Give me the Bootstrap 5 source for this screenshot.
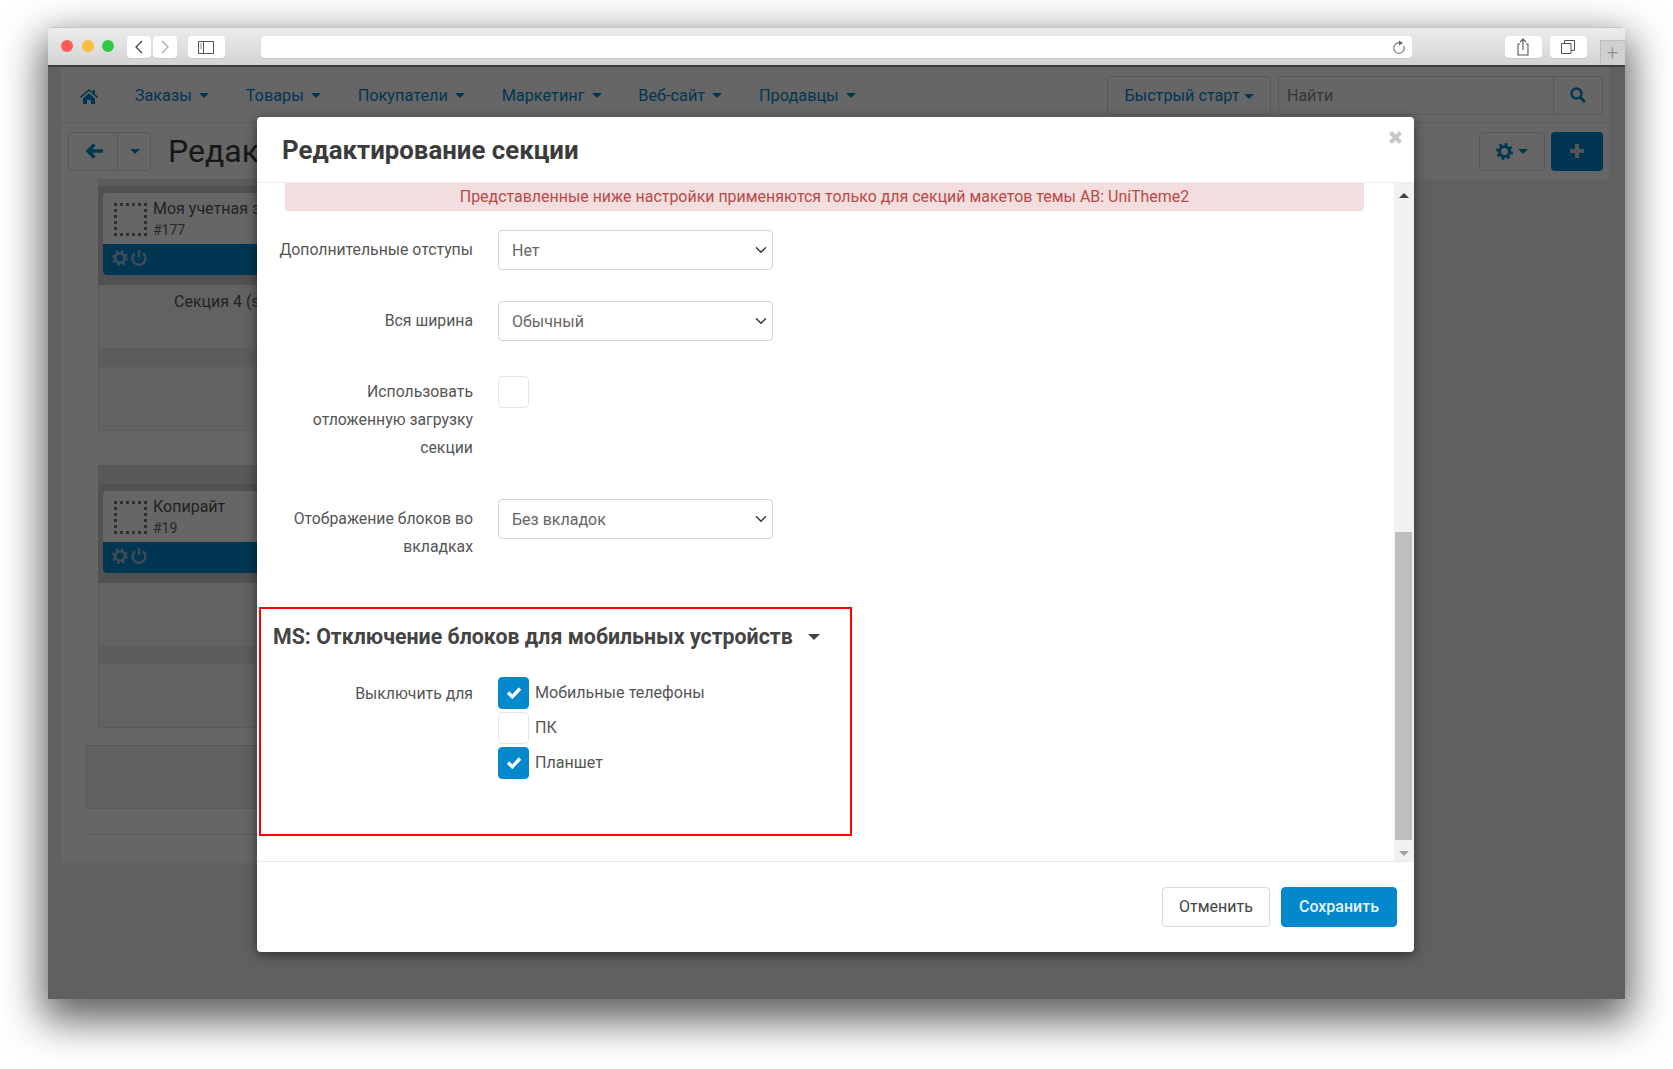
<!DOCTYPE html>
<html lang="ru"><head><meta charset="utf-8"><title>Редактирование секции</title>
<link href="https://cdn.jsdelivr.net/npm/bootstrap@5.3.0/dist/css/bootstrap.min.css" rel="stylesheet">
<style>
html,body{height:100%;overflow:hidden}
body{background:#fff;font-family:Roboto,"Noto Sans",sans-serif;font-size:15.5px;color:#444;padding:27px 0 0 48px}
.win{width:1577px;height:972px;position:relative;overflow:hidden;border-radius:5px 5px 0 0;display:flex;flex-direction:column}
.shadowbox{width:1577px;height:972px;box-shadow:0 16px 40px 6px rgba(0,0,0,.62);border-radius:5px 5px 0 0}
.tbar{height:40px;flex:none;background:linear-gradient(#ececec,#d3d3d3);border-top:1px solid #c4c4c4;border-bottom:2px solid #3b3b42;display:flex;align-items:flex-start;padding:8px 0 0 13px;position:relative}
.dot{width:12px;height:12px;border-radius:50%;margin:4px 8.5px 0 0;flex:none}
.tb{height:22px;background:#fff;border-radius:4px;display:flex;align-items:center;justify-content:center;flex:none;box-shadow:0 1px 0 #c8c8c8}
.tbfirst{margin-left:4px}
.urlb{width:1151px;margin-left:36px;justify-content:flex-end;padding-right:6px}
.plustab{width:25px;height:25px;border:1px solid #bdbdbd;border-right:0;border-bottom:0;margin-left:13px;margin-top:4px;background:#d0d0d0;color:#8e8e8e;font-size:20px;line-height:22px;text-align:center;font-weight:300}
.pagezone{flex:1;background:#eff0f2;position:relative;overflow:hidden;padding:0 0 0 13px}
.toppanel{width:1549px;background:#fff;border-radius:0 0 4px 4px;height:112px}
.navrow{height:56px;display:flex;align-items:center;padding:1px 7px 0 19px;border-bottom:1px solid #eee}
.toolrow{height:56px;display:flex;align-items:center;padding:0 7px 0 7px}
.navi{color:#0388cc;text-decoration:none;font-size:16.3px;display:flex;align-items:center;white-space:nowrap;margin-right:36.8px;padding-top:2px}
.navi:last-of-type{margin-right:0}
.navi .cr{margin-top:-1px}
.cr{display:inline-block;width:0;height:0;border-left:5px solid transparent;border-right:5px solid transparent;border-top:5px solid currentColor;margin-left:7px}
.bg1{height:39px;border:1px solid #ddd;border-radius:4px;display:flex;align-items:center;color:#0388cc;background:#fff}
.qs{width:164px;justify-content:center;margin-left:auto;font-size:16.2px;padding-top:2px}
.srch{width:325px;margin-left:7px;color:#888;font-size:16px;padding-left:8px}
.srch span{flex:1;padding-top:2px}
.srch i{width:49px;height:37px;border-left:1px solid #ddd;display:flex;align-items:center;justify-content:center}
.backg{width:83px;flex:none}
.backg b{width:49px;height:100%;display:flex;align-items:center;justify-content:center;border-right:1px solid #ddd;padding-left:2px}
.backg i{flex:1;display:flex;justify-content:center;padding-left:1px}
.backg .cr{margin:0}
.ptitle{font-size:32px;color:#3a3a3a;margin-left:17px;line-height:1;white-space:nowrap}
.gearb{width:66px;margin-left:auto;justify-content:center;gap:5px}
.plusb{width:52px;height:39px;margin-left:6px;background:#0388cc;border-radius:4px;display:flex;align-items:center;justify-content:center}
.lowpanel{width:1300px;height:684px;background:#fff;border-radius:0 0 4px 4px;padding-left:37px}
.zstrip{background:#e6e6e6}
.zdark{background:#cbcbcb;padding:7px 0 0 5px}
.zbox{background:#f6f6f6;border:1px solid #e4e4e4;border-top:0}
.blk{background:#fff;border-radius:4px;overflow:hidden;color:#555;height:82px;display:flex;flex-direction:column}
.blk .tp{flex:1;display:flex;padding:7px 0 0 11px;gap:6px}
.dash{width:33px;height:33px;border:3px dotted #777;flex:none;margin-top:3px}
.nm{font-size:16px;line-height:18px}
.idn{font-size:14px;line-height:18px;margin-top:3px;color:#666}
.blk .bt{height:31px;background:#0388cc;display:flex;align-items:center;padding:0 0 4px 9px;gap:3px}
.sec4{font-size:16px;color:#555;padding:8px 0 0 75px;line-height:18px}
.outbox{width:1200px;margin:17px 0 0 -12px;height:64px;background:#f0f0f0;border:1px solid #ddd}
.hrline{width:1200px;margin:25px 0 0 -12px;border-top:1px solid #ddd}
.backdropz{position:absolute;inset:0;background:rgba(0,0,0,.6)}
.mdl{position:absolute;left:209px;top:50px;width:1157px;height:835px;background:#fff;border:0;border-radius:4px;box-shadow:0 3px 12px rgba(0,0,0,.5);overflow:hidden;color:#444}
.mdl .modal-header{height:66px;flex:none;padding:2px 25px 0;border-bottom:1px solid #eee;position:relative;border-radius:0}
.mtitle{font-size:25.8px;font-weight:700;color:#3b3b3b;margin:0;line-height:1}
.xclose{position:absolute;right:11px;top:13px;line-height:0}
.mbodyw{height:678px;flex:none;display:flex;padding:0}
.formz{flex:1;overflow:hidden;min-width:0}
.sbar{width:20px;flex:none;background:#f1f1f1;display:flex;flex-direction:column;align-items:center;position:relative}
.sthumb{position:absolute;left:1px;top:349px;width:17px;height:308px;background:#bebebe}
.arru{margin-top:10px;width:0;height:0;border-left:5px solid transparent;border-right:5px solid transparent;border-bottom:5px solid #444}
.arrd{position:absolute;left:5px;bottom:5px;width:0;height:0;border-left:5px solid transparent;border-right:5px solid transparent;border-top:5px solid #a3a3a3}
.warn{margin:0 30px 0 28px;height:28px;padding:0;line-height:28px;text-align:center;background:#f2dede;border:0;border-bottom:1px solid #eed3d7;border-radius:0 0 4px 4px;color:#b94a48;font-size:15.95px}
.frow{display:flex;align-items:flex-start}
.flab{width:198px;margin-left:18px;flex:none;text-align:right;line-height:28px;font-size:15.8px;color:#555;padding-top:2px}
.flab.tall{padding-top:6px}
.fctl{margin-left:25px;flex:none}
.form-select.sel{width:275px;height:40px;font-size:16px;color:#666;padding:2px 13px 0;border-color:#ccd6e0;border-radius:4px;font-family:inherit;background-position:right 3px center}
.cb{width:31px;height:32px;border:1px solid #e5e5e5;border-radius:4px;background:#fff;flex:none;display:flex;align-items:center;justify-content:center}
.cb.on{background:#0388cc;border-color:#0388cc}
.cb svg{margin-top:-2px}
.r1{margin-top:19px}.r2{margin-top:31px}.r3{margin-top:35px}.r4{margin-top:37px}
.redbox{margin:46px 0 0 2px;width:593px;height:229px;border:2px solid #f00;padding:0 0 0 12px}
.msh{font-size:21.35px;font-weight:700;color:#444;margin-top:14px;line-height:28px;display:flex;align-items:center;white-space:nowrap}
.msh .cr{margin-left:15px;border-left-width:6px;border-right-width:6px;border-top-width:6px}
.mrow{display:flex;margin:26px 0 0 -16px}
.mlab{width:216px;text-align:right;font-size:15.8px;line-height:34px;color:#555}
.mlist{margin-left:25px;display:flex;flex-direction:column;gap:3px}
.mitem{display:flex;align-items:center;gap:6px;height:32px;font-size:16.1px;color:#555;line-height:34px}
.mdl .modal-footer{flex:1;padding:0 17px 0 0;border-top:1px solid #e8e8e8;gap:11px;justify-content:flex-end;align-items:center;border-radius:0;margin:0;flex-wrap:nowrap}
.mdl .modal-footer>*{margin:0}
.bc{width:108px;height:40px;background:#fff;border:1px solid #d2dae2;border-radius:4px;color:#444;font-size:16px;padding:0}
.bs{width:116px;height:40px;background:#0388cc;border:1px solid #0388cc;border-radius:4px;color:#e6f2f9;font-size:16px;font-weight:500;padding:0}
</style></head>
<body>
<svg width="0" height="0" class="position-absolute"><defs>
<symbol id="gear" viewBox="0 0 17 17"><circle cx="8.5" cy="8.5" r="5" fill="none" stroke="currentColor" stroke-width="3"/><circle cx="8.5" cy="8.5" r="6.8" fill="none" stroke="currentColor" stroke-width="3.4" stroke-dasharray="2.7 2.64"/></symbol>
<symbol id="chk" viewBox="0 0 16 13"><path d="M2 6.5l4.3 4.3L14 2.500" fill="none" stroke="#fff" stroke-width="3.4"/></symbol>
<symbol id="pwr" viewBox="0 0 16 17"><path d="M4 4.200a6.500 6.500 0 1 0 8 0M8 1v7" fill="none" stroke="currentColor" stroke-width="2.400"/></symbol>
</defs></svg>
<div class="shadowbox">
<div class="win">
  <div class="tbar">
    <span class="dot" style="background:#fc5b57"></span><span class="dot" style="background:#fdbc40"></span><span class="dot" style="background:#33c748"></span>
    <span class="tb tbfirst" style="width:24px"><svg width="10" height="16" viewBox="0 0 10 16"><path d="M8 2 2 8l6 6" fill="none" stroke="#444" stroke-width="1.3"/></svg></span>
    <span class="tb" style="width:24px;margin-left:2px"><svg width="10" height="16" viewBox="0 0 10 16"><path d="M2 2l6 6-6 6" fill="none" stroke="#aaa" stroke-width="1.3"/></svg></span>
    <span class="tb" style="width:37px;margin-left:11px"><svg width="16" height="13" viewBox="0 0 16 13"><path d="M.5.5h15v12H.5zM5.500.5v12" fill="none" stroke="#555"/><path d="M2 3h2M2 5h2M2 7h2" stroke="#888"/></svg></span>
    <span class="tb urlb"><svg width="14" height="15" viewBox="0 0 14 15"><path d="M11.500 5.500a5.200 5.200 0 1 1-3.500-2.500" fill="none" stroke="#777" stroke-width="1.100"/><path d="M7 .5l4 2.500-4 2.500z" fill="#666"/></svg></span>
    <span class="tb" style="width:37px;margin-left:93px"><svg width="14" height="18" viewBox="0 0 14 18"><path d="M4 6H2v11h10V6h-2M7 12V1M4 4l3-3 3 3" fill="none" stroke="#555" stroke-width="1.100"/></svg></span>
    <span class="tb" style="width:37px;margin-left:8px"><svg width="14" height="14" viewBox="0 0 14 14"><path d="M.5 3.500h9.500v10H.5zM3.500 3.500V.5h10v10H10" fill="none" stroke="#555"/></svg></span>
    <span class="plustab">+</span>
  </div>
  <div class="pagezone">
    <div class="toppanel">
      <div class="navrow">
        <a class="navi"><svg width="18" height="15" viewBox="0 0 18 15"><path d="M9 0 0 7.700l1 1.200L9 2l8 6.900 1-1.200-3-2.600V1h-2.500v2L9 0zM3 9.500V15h4v-4h4v4h4V9.500L9 4.300z" fill="#0388cc"/></svg></a>
        <a class="navi">Заказы<span class="cr"></span></a>
        <a class="navi">Товары<span class="cr"></span></a>
        <a class="navi">Покупатели<span class="cr"></span></a>
        <a class="navi">Маркетинг<span class="cr"></span></a>
        <a class="navi">Веб-сайт<span class="cr"></span></a>
        <a class="navi">Продавцы<span class="cr"></span></a>
        <div class="bg1 qs">Быстрый старт<span class="cr" style="margin-left:4px"></span></div>
        <div class="bg1 srch"><span>Найти</span><i><svg width="16" height="16" viewBox="0 0 16 16"><circle cx="6.500" cy="6.500" r="5" fill="none" stroke="#0388cc" stroke-width="2.400"/><path d="M10.500 10.500 15 15" stroke="#0388cc" stroke-width="2.800"/></svg></i></div>
      </div>
      <div class="toolrow">
        <div class="bg1 backg"><b><svg width="17" height="16" viewBox="0 0 17 16"><path d="M8.500 1.500 2 8l6.500 6.500M3 8h14" fill="none" stroke="#0388cc" stroke-width="3.400"/></svg></b><i><span class="cr"></span></i></div>
        <div class="ptitle">Редакт</div>
        <div class="bg1 gearb"><svg width="17" height="17"><use href="#gear"/></svg><span class="cr m-0"></span></div>
        <div class="plusb"><svg width="16" height="16" viewBox="0 0 16 16"><path d="M8 1v14M1 8h14" stroke="#d8d8d8" stroke-width="4"/></svg></div>
      </div>
    </div>
    <div class="lowpanel">
      <div class="zstrip" style="height:7px"></div>
      <div class="zdark" style="height:99px"><div class="blk"><div class="tp"><span class="dash"></span><div><div class="nm">Моя учетная з</div><div class="idn">#177</div></div></div><div class="bt text-info-emphasis"><svg width="16" height="16" style="color:#9bd"><use href="#gear"/></svg><svg width="16" height="17" style="color:#9bd"><use href="#pwr"/></svg></div></div></div>
      <div class="zbox" style="height:64px"><div class="sec4">Секция 4 (s</div></div>
      <div class="zstrip" style="height:18px"></div>
      <div class="zbox" style="height:64px"></div>
      <div style="height:34px"></div>
      <div class="zstrip" style="height:19px;background:#dcdcdc"></div>
      <div class="zdark" style="height:99px"><div class="blk"><div class="tp"><span class="dash"></span><div><div class="nm">Копирайт</div><div class="idn">#19</div></div></div><div class="bt"><svg width="16" height="16" style="color:#9bd"><use href="#gear"/></svg><svg width="16" height="17" style="color:#9bd"><use href="#pwr"/></svg></div></div></div>
      <div class="zbox" style="height:64px"></div>
      <div class="zstrip" style="height:17px"></div>
      <div class="zbox" style="height:64px"></div>
      <div class="outbox"></div>
      <div class="hrline"></div>
    </div>
    <div class="backdropz"></div>
    <div class="modal-content mdl">
      <div class="modal-header"><h5 class="mtitle">Редактирование секции</h5><span class="xclose"><svg width="15" height="15" viewBox="0 0 15 15"><path d="M2.500 2.500l10 10M12.500 2.500l-10 10" stroke="#c8c8c8" stroke-width="4"/></svg></span></div>
      <div class="modal-body mbodyw">
        <div class="formz">
          <div class="alert warn">Представленные ниже настройки применяются только для секций макетов темы AB: UniTheme2</div>
          <div class="frow r1"><div class="flab tall">Дополнительные отступы</div><div class="fctl"><select class="form-select sel"><option>Нет</option></select></div></div>
          <div class="frow r2"><div class="flab tall">Вся ширина</div><div class="fctl"><select class="form-select sel"><option>Обычный</option></select></div></div>
          <div class="frow r3"><div class="flab">Использовать отложенную загрузку секции</div><div class="fctl"><span class="cb"></span></div></div>
          <div class="frow r4"><div class="flab tall">Отображение блоков во вкладках</div><div class="fctl"><select class="form-select sel"><option>Без вкладок</option></select></div></div>
          <div class="redbox">
            <div class="msh">MS: Отключение блоков для мобильных устройств<span class="cr"></span></div>
            <div class="mrow"><div class="mlab">Выключить для</div>
              <div class="mlist">
                <div class="mitem"><span class="cb on"><svg width="16" height="13"><use href="#chk"/></svg></span>Мобильные телефоны</div>
                <div class="mitem"><span class="cb"></span>ПК</div>
                <div class="mitem"><span class="cb on"><svg width="16" height="13"><use href="#chk"/></svg></span>Планшет</div>
              </div>
            </div>
          </div>
        </div>
        <div class="sbar"><span class="arru"></span><span class="sthumb"></span><span class="arrd"></span></div>
      </div>
      <div class="modal-footer"><button class="bc">Отменить</button><button class="bs">Сохранить</button></div>
    </div>
  </div>
</div>
</div>
<script src="https://cdn.jsdelivr.net/npm/bootstrap@5.3.0/dist/js/bootstrap.bundle.min.js"></script>
</body></html>
